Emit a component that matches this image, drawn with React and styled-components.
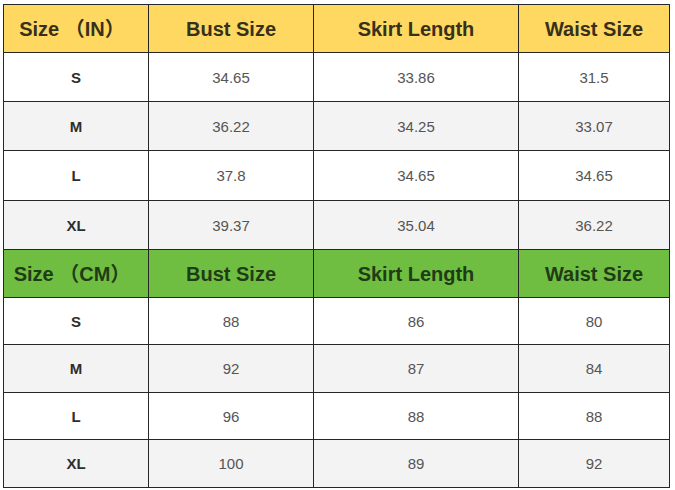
import React from "react";
import styled, { createGlobalStyle } from "styled-components";

const Global = createGlobalStyle`
  html, body { margin: 0; padding: 0; background: #ffffff; }
  body { font-family: "Liberation Sans", Arial, sans-serif; }
`;

const Page = styled.div`
  padding: 4px 0 0 3px;
`;

const Grid = styled.div`
  display: grid;
  width: 667px;
  box-sizing: border-box;
  grid-template-columns: 144px 164px 204px 150px;
  grid-template-rows: 47px 48px 48px 49px 48px 47px 46px 47px 46px 47px;
  gap: 1px;
  padding: 1px;
  background: #262626;
`;

const themes = {
  yellow: { bg: "#ffd862", fg: "#37301a" },
  green: { bg: "#70be41", fg: "#1f3c17" },
};

const HeadCell = styled.div`
  display: flex;
  align-items: center;
  justify-content: center;
  background: ${(p) => themes[p.$tone].bg};
  color: ${(p) => themes[p.$tone].fg};
  font-family: "Liberation Sans", "Noto Sans CJK SC", Arial, sans-serif;
  font-weight: 700;
  font-size: 20px;
  line-height: 24px;
  white-space: pre;
  padding-right: ${(p) => (p.$first ? "8px" : "0")};
`;

const Cell = styled.div`
  display: flex;
  align-items: center;
  justify-content: center;
  background: ${(p) => (p.$alt ? "#f3f3f3" : "#ffffff")};
  color: ${(p) => (p.$label ? "#2e2e2e" : "#555555")};
  font-weight: ${(p) => (p.$label ? 700 : 400)};
  font-size: 15px;
`;

const sections = [
  {
    tone: "yellow",
    title: "Size （IN）",
    rows: [
      ["S", "34.65", "33.86", "31.5"],
      ["M", "36.22", "34.25", "33.07"],
      ["L", "37.8", "34.65", "34.65"],
      ["XL", "39.37", "35.04", "36.22"],
    ],
  },
  {
    tone: "green",
    title: "Size （CM）",
    rows: [
      ["S", "88", "86", "80"],
      ["M", "92", "87", "84"],
      ["L", "96", "88", "88"],
      ["XL", "100", "89", "92"],
    ],
  },
];

const heads = ["Bust Size", "Skirt Length", "Waist Size"];

export default function App() {
  return (
    <>
      <Global />
      <Page>
        <Grid>
          {sections.map((s) => (
            <React.Fragment key={s.tone}>
              <HeadCell $tone={s.tone} $first>
                {s.title}
              </HeadCell>
              {heads.map((h) => (
                <HeadCell key={h} $tone={s.tone}>
                  {h}
                </HeadCell>
              ))}
              {s.rows.map((r, i) =>
                r.map((v, j) => (
                  <Cell key={`${i}-${j}`} $alt={i % 2 === 1} $label={j === 0}>
                    {v}
                  </Cell>
                ))
              )}
            </React.Fragment>
          ))}
        </Grid>
      </Page>
    </>
  );
}
